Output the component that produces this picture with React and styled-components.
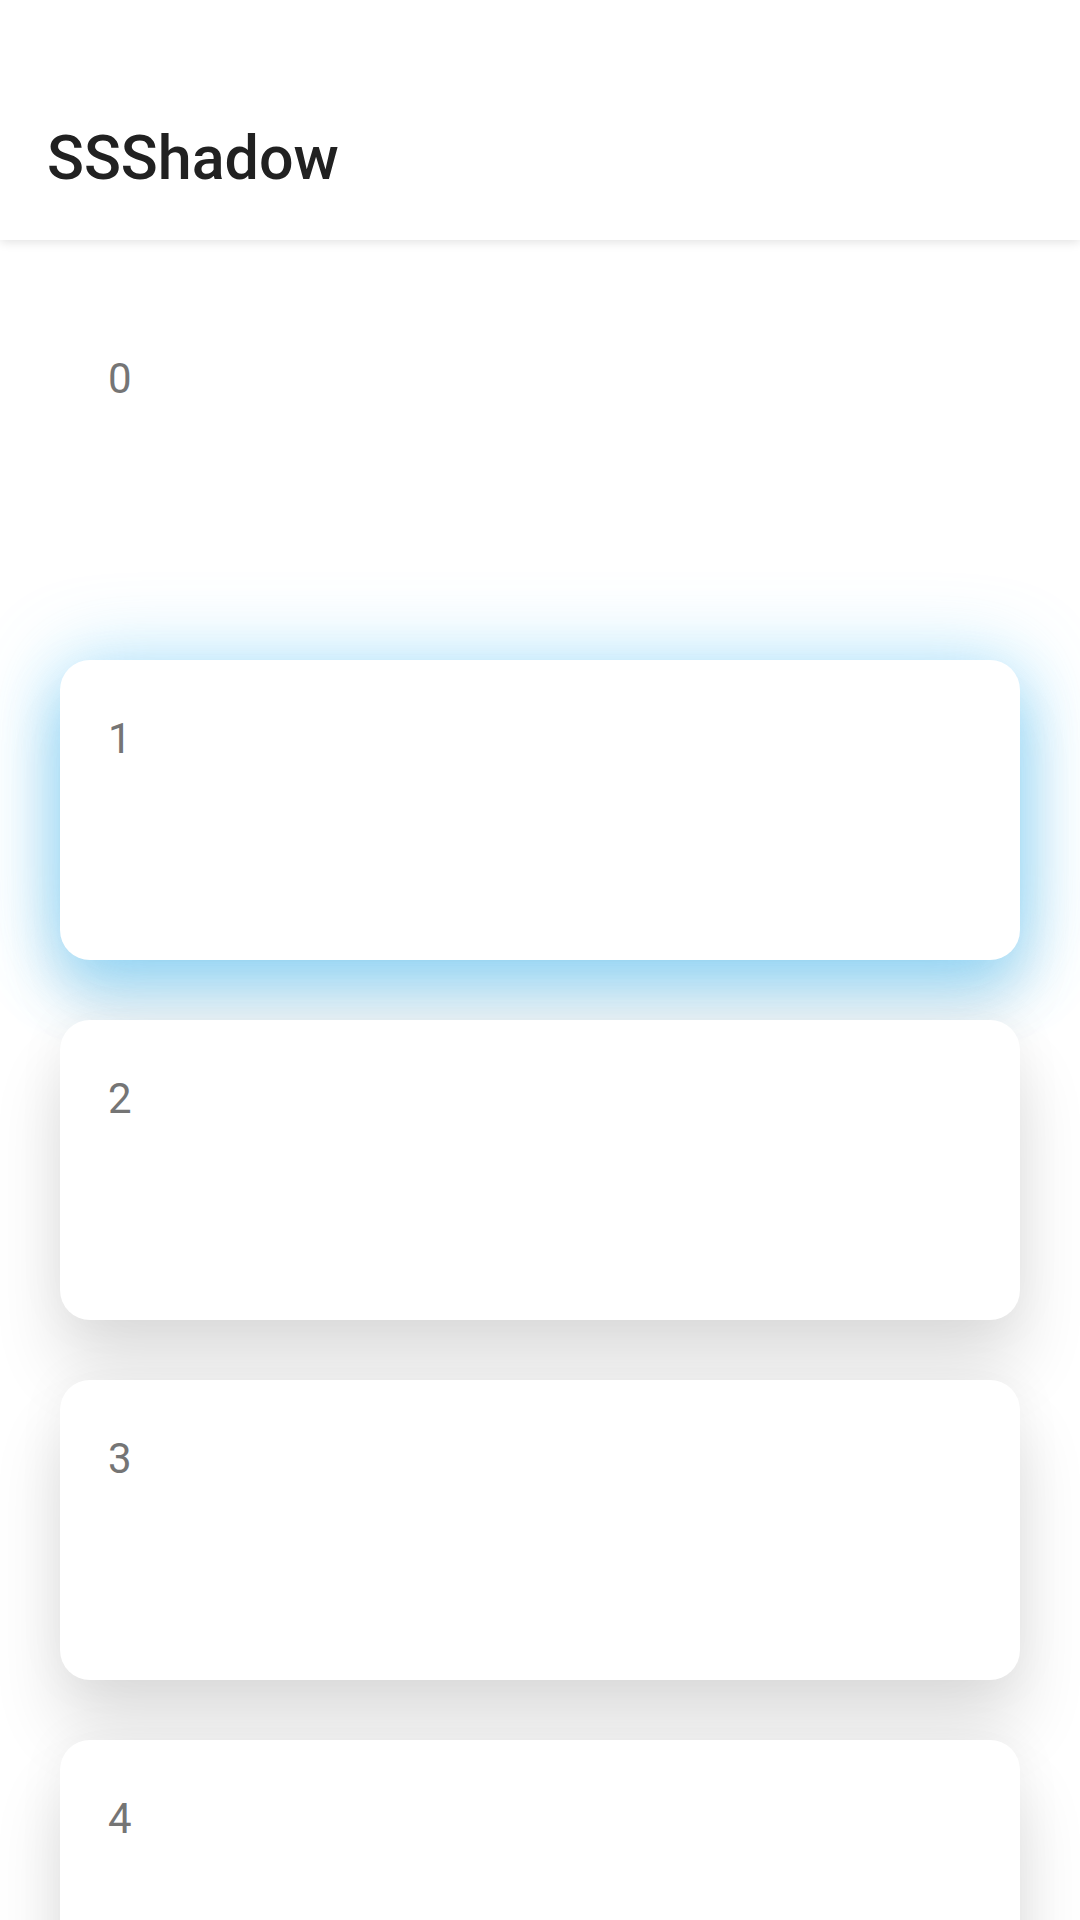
import React from 'react'
import styled, { createGlobalStyle } from 'styled-components'

const GlobalStyle = createGlobalStyle`
  html, body {
    margin: 0;
    padding: 0;
    background: #ffffff;
    font-family: Roboto, "Noto Sans", sans-serif;
  }
  #root {
    min-height: 1920px;
    overflow: hidden;
  }
`

const Page = styled.div`
  width: 1080px;
  height: 1920px;
  overflow: hidden;
  background: #ffffff;
`

const Toolbar = styled.header`
  position: relative;
  z-index: 2;
  height: 240px;
  box-sizing: border-box;
  padding: 123px 0 0 47px;
  background: #ffffff;
  box-shadow: 0 2px 10px rgba(0, 0, 0, 0.12);
`

const Title = styled.h1`
  margin: 0;
  font-size: 61px;
  font-weight: 500;
  line-height: 71px;
  color: #212121;
`

const List = styled.div`
  display: flex;
  flex-direction: column;
  gap: 60px;
  padding: 60px 60px 0;
`

// android style elevation: soft ambient glow plus a spot shadow pushed down
const shadows = {
  none: 'none',
  blue: '0 0 80px rgba(79, 190, 245, 0.42), 0 30px 60px rgba(79, 190, 245, 0.45), 0 50px 70px rgba(0, 0, 0, 0.05)',
  grey: '0 0 50px rgba(0, 0, 0, 0.05), 0 50px 70px rgba(0, 0, 0, 0.12)',
}

const Card = styled.div`
  height: 300px;
  box-sizing: border-box;
  padding: 54px 48px;
  border-radius: 30px;
  background: #ffffff;
  flex-shrink: 0;
  box-shadow: ${p => shadows[p.$shadow]};
`

const Label = styled.span`
  display: block;
  font-size: 42px;
  line-height: 49px;
  color: #757575;
`

const items = [
  { id: 0, shadow: 'none' },
  { id: 1, shadow: 'blue' },
  { id: 2, shadow: 'grey' },
  { id: 3, shadow: 'grey' },
  { id: 4, shadow: 'grey' },
]

const App = () => {
  return (
    <Page>
      <GlobalStyle />
      <Toolbar>
        <Title>SSShadow</Title>
      </Toolbar>
      <List>
        {items.map(item => (
          <Card key={item.id} $shadow={item.shadow}>
            <Label>{item.id}</Label>
          </Card>
        ))}
      </List>
    </Page>
  )
}

export default App
